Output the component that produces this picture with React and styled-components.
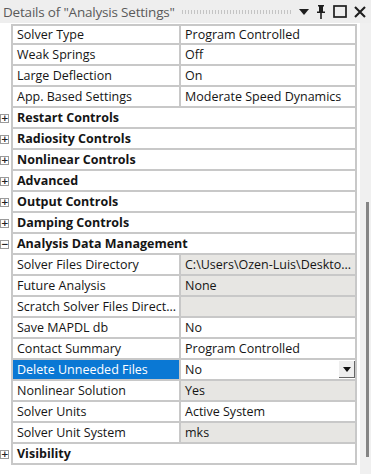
import styled, { createGlobalStyle } from "styled-components";

const GlobalStyle = createGlobalStyle`
  html, body { margin: 0; padding: 0; background: #ffffff; }
  body { font-family: "Open Sans", "Noto Sans", "Liberation Sans", sans-serif; }
`;

const rows = [
  { label: "Solver Type", value: "Program Controlled" },
  { label: "Weak Springs", value: "Off" },
  { label: "Large Deflection", value: "On" },
  { label: "App. Based Settings", value: "Moderate Speed Dynamics" },
  { group: "Restart Controls", open: false },
  { group: "Radiosity Controls", open: false },
  { group: "Nonlinear Controls", open: false },
  { group: "Advanced", open: false },
  { group: "Output Controls", open: false },
  { group: "Damping Controls", open: false },
  { group: "Analysis Data Management", open: true },
  { label: "Solver Files Directory", value: "C:\\Users\\Ozen-Luis\\Deskto...", readOnly: true },
  { label: "Future Analysis", value: "None", readOnly: true },
  { label: "Scratch Solver Files Direct...", value: "", readOnly: true },
  { label: "Save MAPDL db", value: "No" },
  { label: "Contact Summary", value: "Program Controlled" },
  { label: "Delete Unneeded Files", value: "No", selected: true },
  { label: "Nonlinear Solution", value: "Yes", readOnly: true },
  { label: "Solver Units", value: "Active System" },
  { label: "Solver Unit System", value: "mks", readOnly: true },
  { group: "Visibility", open: false },
];

export default function App() {
  return (
    <Panel>
      <GlobalStyle />
      <TitleBar>
        <Title>Details of "Analysis Settings"</Title>
        <Grip />
        <TitleIcons>
          <svg width="10" height="6" viewBox="0 0 10 6"><path d="M0 0h10L5 6z" fill="#1e1e1e" /></svg>
          <svg width="10" height="14" viewBox="0 0 10 14">
            <path d="M2 0h6v1.5H7v5h2V8H5.8v6H4.2V8H1V6.5h2v-5H2z" fill="#1e1e1e" />
          </svg>
          <svg width="14" height="13" viewBox="0 0 14 13"><rect x="1" y="1" width="12" height="11" fill="none" stroke="#1e1e1e" strokeWidth="1.7" /></svg>
          <svg width="12" height="12" viewBox="0 0 12 12"><path d="M1 1l10 10M11 1L1 11" stroke="#1e1e1e" strokeWidth="2.1" /></svg>
        </TitleIcons>
      </TitleBar>
      <Body>
        <Grid>
          {rows.map((r, i) => (
            <Row key={i}>
              <Gutter>{r.group && <Expander>{r.open ? "−" : "+"}</Expander>}</Gutter>
              {r.group ? (
                <GroupCell>{r.group}</GroupCell>
              ) : (
                <Cells $first={i === 0}>
                  <Label $selected={r.selected}>{r.label}</Label>
                  <Value $readOnly={r.readOnly}>
                    <span>{r.value}</span>
                    {r.selected && (
                      <DropButton>
                        <svg width="8" height="5" viewBox="0 0 8 5"><path d="M0 0h8L4 5z" fill="#111" /></svg>
                      </DropButton>
                    )}
                  </Value>
                </Cells>
              )}
            </Row>
          ))}
        </Grid>
        <ScrollTrack>
          <Thumb />
        </ScrollTrack>
      </Body>
    </Panel>
  );
}

const Panel = styled.div`
  width: 371px;
  height: 474px;
  display: flex;
  flex-direction: column;
  background: #ffffff;
  overflow: hidden;
`;

const TitleBar = styled.div`
  height: 23px;
  display: flex;
  align-items: center;
  background: #eeeeee;
  padding: 0 5px 0 3px;
  gap: 6px;
`;

const Title = styled.div`
  font-size: 13.5px;
  color: #5a5a5a;
  white-space: nowrap;
  letter-spacing: -0.2px;
`;

const Grip = styled.div`
  flex: 1;
  height: 4px;
  background-image: radial-gradient(circle, #c4c4c4 0.8px, transparent 1px);
  background-size: 3px 2px;
`;

const TitleIcons = styled.div`
  display: flex;
  align-items: center;
  gap: 7px;
`;

const Body = styled.div`
  flex: 1;
  display: flex;
`;

const Grid = styled.div`
  width: 357px;
  padding: 1px 3px 0 0;
`;

const Row = styled.div`
  display: flex;
  height: 21px;
`;

const Gutter = styled.div`
  width: 11px;
  display: flex;
  align-items: center;
`;

const Expander = styled.div`
  width: 7px;
  height: 7px;
  border: 1px solid #9a9a9a;
  font-size: 9px;
  line-height: 6px;
  text-align: center;
  font-weight: 700;
  color: #222;
  background: #fff;
  font-family: "DejaVu Sans", sans-serif;
`;

const Cells = styled.div`
  flex: 1;
  display: grid;
  grid-template-columns: 168px 1fr;
  border: 2px solid #c8c8c8;
  border-top: ${(p) => (p.$first ? "2px solid #c8c8c8" : "none")};
  box-sizing: border-box;
`;

const GroupCell = styled.div`
  flex: 1;
  border: 2px solid #c8c8c8;
  border-top: none;
  box-sizing: border-box;
  font-size: 12.5px;
  font-weight: 700;
  color: #151515;
  padding-left: 4px;
  display: flex;
  align-items: center;
  background: #fff;
`;

const Label = styled.div`
  display: flex;
  align-items: center;
  padding-left: 4px;
  font-size: 12.5px;
  color: ${(p) => (p.$selected ? "#ffffff" : "#151515")};
  background: ${(p) => (p.$selected ? "#0a78d4" : "#ffffff")};
  border-right: 2px solid #c8c8c8;
  white-space: nowrap;
  overflow: hidden;
`;

const Value = styled.div`
  display: flex;
  align-items: center;
  justify-content: space-between;
  padding-left: 4px;
  font-size: 12.5px;
  color: #151515;
  background: ${(p) => (p.$readOnly ? "#e7e6e3" : "#ffffff")};
  white-space: nowrap;
  overflow: hidden;
`;

const DropButton = styled.div`
  width: 16px;
  height: 17px;
  display: flex;
  align-items: center;
  justify-content: center;
  background: #eeeeee;
  border-right: 1px solid #666;
  border-bottom: 1px solid #666;
  box-sizing: border-box;
`;

const ScrollTrack = styled.div`
  flex: 1;
  background: #f0f0f0;
  display: flex;
  justify-content: flex-end;
  padding: 179px 2px 0 0;
`;

const Thumb = styled.div`
  width: 3px;
  height: 255px;
  background: #858585;
`;
